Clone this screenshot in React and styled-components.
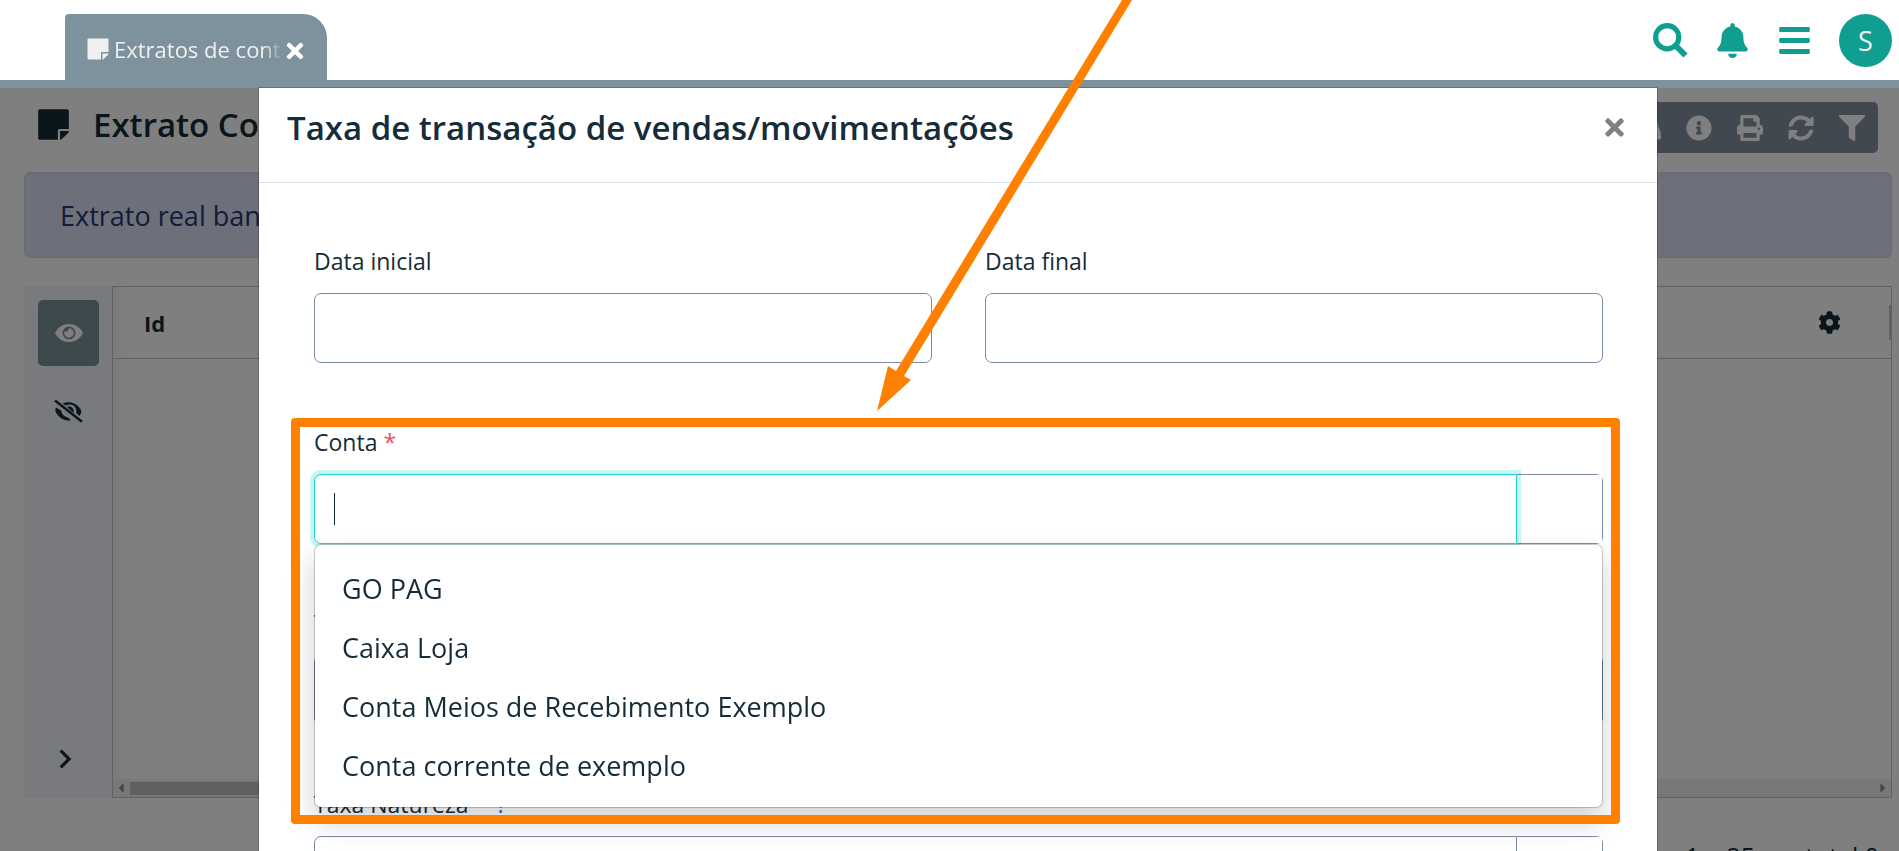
import React from "react";
import styled, { createGlobalStyle, css } from "styled-components";
import {
  FaStickyNote, FaTimes, FaBell, FaBars, FaInfoCircle, FaPrint,
  FaSyncAlt, FaFilter, FaCog, FaBinoculars, FaCaretLeft, FaCaretRight,
} from "react-icons/fa";
import { MdOutlineKeyboardArrowRight } from "react-icons/md";

const Global = createGlobalStyle`
  *, *::before, *::after { box-sizing: border-box; }
  html, body, #root { height: 100%; }
  body {
    margin: 0;
    overflow: hidden;
    background: #fff;
    color: #152c39;
    font-family: "Open Sans", "Noto Sans", sans-serif;
    font-size: 27px;
  }
  button { font: inherit; color: inherit; border: 0; padding: 0; background: none; cursor: pointer; }
  button, a { display: inline-flex; align-items: center; justify-content: center; }
  svg { display: block; flex: none; }
`;

const Page = styled.div`
  position: relative;
  display: flex;
  flex-direction: column;
  height: 100%;
  overflow: hidden;
`;

const TopBar = styled.header`
  display: flex;
  align-items: flex-end;
  justify-content: space-between;
  flex: none;
  height: 88px;
  padding: 0 7px 0 65px;
  border-bottom: 8px solid #7d929d;
`;

const Tab = styled.div`
  display: flex;
  align-items: center;
  width: 262px;
  height: 66px;
  padding: 4px 20px 0 22px;
  background: #7d929d;
  border-radius: 4px 24px 0 0;
  color: #f0f0f0;
`;

const TabLink = styled.a`
  && { justify-content: flex-start; }
  flex: 1;
  min-width: 0;
  gap: 5px;
  color: inherit;
  text-decoration: none;
  white-space: nowrap;
  overflow: hidden;
  font-size: 22px;
  -webkit-mask-image: linear-gradient(90deg, #000 90%, transparent);
  mask-image: linear-gradient(90deg, #000 90%, transparent);
`;

const TabClose = styled.button`
  && { color: #fff; }
  padding-top: 4px;
`;

const NoteIcon = styled(FaStickyNote)`
  width: ${(p) => p.$width}px;
`;

const TopActions = styled.nav`
  display: flex;
  align-items: center;
  height: 80px;
  gap: 27px;
  color: #119e92;
`;

const Avatar = styled.button`
  width: 53px;
  height: 53px;
  border-radius: 50%;
  background: #119e92;
  && { color: #f0f4f4; }
`;

const Main = styled.main`
  position: relative;
  flex: 1;
  min-height: 0;
`;

const Content = styled.section`
  padding: 14px 7px 0 24px;
`;

const TitleRow = styled.div`
  display: flex;
  align-items: center;
  justify-content: space-between;
  height: 51px;
  padding: 0 14px;
`;

const Title = styled.h1`
  display: flex;
  align-items: center;
  gap: 24px;
  margin: 0;
  padding-bottom: 6px;
  font-size: 33px;
  font-weight: 600;
`;

const Toolbar = styled.div`
  display: flex;
  align-items: center;
  gap: 25px;
  height: 51px;
  padding: 0 13px;
  background: #83909f;
  border-radius: 5px;
  color: #fff;
`;

const Notice = styled.p`
  display: flex;
  align-items: center;
  height: 86px;
  margin: 19px 0 28px;
  padding: 0 35px;
  background: #dae1f4;
  border: 1px solid #ccd7f1;
  border-radius: 6px;
  color: #223a76;
`;

const Panel = styled.div`
  display: flex;
  height: 512px;
`;

const Side = styled.aside`
  display: flex;
  flex-direction: column;
  align-items: center;
  gap: 12px;
  width: 88px;
  padding: 14px 13px 6px 14px;
  background: #f2f5fa;
`;

const SideButton = styled.button`
  width: 100%;
  height: 66px;
  border-radius: 5px;
  ${(p) => p.$active && css`
    background: #7d929d;
    && { color: #fff; }
  `}
  ${(p) => p.$last && css`
    margin-top: auto;
    padding-right: 8px;
  `}
`;

const Grid = styled.div`
  display: flex;
  flex-direction: column;
  flex: 1;
  border: 1px solid #c0c3cd;
  box-shadow: inset 16px 0 16px -12px rgba(0, 0, 0, 0.06);
`;

const GridTable = styled.table`
  width: 100%;
  border-spacing: 0;
`;

const HeadCell = styled.th`
  position: relative;
  height: 72px;
  padding: 0 50px 0 31px;
  border-bottom: 1px solid #c0c3cd;
  text-align: ${(p) => (p.$end ? "right" : "left")};
  font-size: 22px;
  font-weight: 700;
  ${(p) => p.$end && css`
    &::after {
      content: "";
      position: absolute;
      right: 0;
      top: 18px;
      width: 2px;
      height: 35px;
      background: #c0c3cd;
    }
  `}
`;

const GearButton = styled.button`
  padding-bottom: 5px;
  vertical-align: middle;
`;

const ScrollTrack = styled.div`
  display: flex;
  align-items: center;
  justify-content: space-between;
  height: 18px;
  margin-top: auto;
  padding: 0 1px;
  background: #f1f1f1;
  color: #8b8b8b;
`;

const ScrollThumb = styled.div`
  flex: 0 1 40%;
  height: 13px;
  margin: 0 auto 0 2px;
  background: #c1c1c1;
`;

const Pager = styled.p`
  margin: 40px 13px 0 0;
  font-size: 25px;
  line-height: 36px;
  text-align: right;
`;

const Backdrop = styled.div`
  position: absolute;
  inset: 0;
  padding: 0 242px 0 259px;
  background: rgba(0, 0, 0, 0.5);
`;

const Dialog = styled.div`
  min-height: 100%;
  background: #fff;
  box-shadow: 0 0 0 1px rgba(0, 0, 0, 0.2);
`;

const DialogHeader = styled.div`
  display: flex;
  align-items: center;
  justify-content: space-between;
  height: 95px;
  padding: 0 29px 15px 28px;
  border-bottom: 1px solid #dfe0e6;
`;

const DialogTitle = styled.h2`
  margin: 0;
  font-size: 33px;
  font-weight: 600;
`;

const DialogClose = styled.button`
  && { color: #808080; }
`;

const Form = styled.form`
  display: grid;
  grid-template-columns: 1fr 1fr;
  column-gap: 53px;
  row-gap: 51px;
  padding: 50px 54px 0 55px;
`;

const Field = styled.div`
  position: relative;
  min-width: 0;
  grid-column: ${(p) => (p.$wide ? "1 / -1" : "auto")};
`;

const Label = styled.label`
  display: flex;
  gap: 6px;
  height: 60px;
  padding-top: 12px;
  font-size: 23px;
  line-height: 32px;
`;

const Required = styled.span`
  color: #e8505b;
`;

const Help = styled.span`
  margin-left: 22px;
  color: #2f6be0;
`;

const TextInput = styled.input`
  display: block;
  flex: 1;
  width: 100%;
  min-width: 0;
  height: 70px;
  padding: 0 20px;
  border: 1px solid #7d8aa5;
  border-radius: 7px;
  background: #fff;
  color: inherit;
  font: inherit;
  outline: 0;
  ${(p) => p.$grouped && css`border-radius: 7px 0 0 7px;`}
  ${(p) => p.$open && css`
    position: relative;
    border-color: #20d3c8;
    box-shadow: 0 0 0 4px #c8f5f1;
    caret-color: transparent;
  `}
`;

const InputGroup = styled.div`
  position: relative;
  display: flex;
`;

const Caret = styled.span`
  position: absolute;
  top: 19px;
  left: 20px;
  width: 1px;
  height: 32px;
  background: #152c39;
  pointer-events: none;
`;

const Addon = styled.button`
  width: 86px;
  height: 70px;
  && { border: 1px solid #7d8aa5; border-left: 0; }
  clip-path: inset(0 round 0 7px 7px 0);
`;

const Menu = styled.ul`
  position: absolute;
  z-index: 2;
  top: 130px;
  left: 0;
  right: 0;
  margin: 0;
  padding: 14px 0 12px;
  list-style: none;
  background: #fff;
  background-clip: padding-box;
  border: 1px solid rgba(0, 0, 0, 0.2);
  border-radius: 7px;
  box-shadow: 0 14px 28px rgba(0, 0, 0, 0.18);
`;

const MenuItem = styled.li`
  height: 59px;
  padding: 0 27px;
  line-height: 59px;
`;

const Highlight = styled.div`
  position: absolute;
  z-index: 3;
  top: 4px;
  left: -23px;
  right: -17px;
  height: 406px;
  border: 9px solid #ff8000;
  border-radius: 4px;
  pointer-events: none;
`;

const Pointer = styled.svg`
  position: absolute;
  z-index: 4;
  top: 0;
  left: 877px;
  pointer-events: none;
`;

const SearchIcon = () => (
  <svg width="35" height="35" viewBox="0 0 35 35" fill="none" stroke="currentColor" strokeWidth="5.200" aria-hidden="true">
    <circle cx="14.200" cy="14.200" r="11.600" />
    <path strokeWidth="6" strokeLinejoin="round" d="M22 22l10.500 10.500" />
  </svg>
);

const EyeIcon = () => (
  <svg width="28" height="20" viewBox="0 0 28 20" aria-hidden="true">
    <path fill="currentColor" d="M0 10C3 4 8 1 14 1s11 3 14 9c-3 6-8 9-14 9S3 16 0 10z" />
    <circle cx="14" cy="10" r="5.600" fill="none" stroke="#7d929d" strokeWidth="1.700" />
    <path fill="#7d929d" d="M9.500 8.500a4.500 4.500 0 0 1 4-4c.8 2-1 4.300-4 4z" />
  </svg>
);

const EyeOffIcon = () => (
  <svg width="29" height="24" viewBox="0 0 29 24" fill="none" stroke="currentColor" aria-hidden="true">
    <path fill="currentColor" stroke="none" d="M2 8.500C1 10.500 1 12 2.500 14.500 5.500 19 10 21.600 15 21.600l2-.4-3-2.800C9.500 17.500 7 14 7.500 11.800z" />
    <path fill="currentColor" stroke="none" d="M8.500 4.500C14 2 20 3 24 7c3.800 4 4.300 6 1.500 10l-3.300-3C23 10 21 6 16.500 5.500c-2-.2-3.500.2-4.700 1z" />
    <path fill="currentColor" stroke="none" d="M13 8c4-1.500 7.500 1.500 6.500 6z" />
    <path strokeWidth="2.400" d="M1 1.500 28 22.700" />
  </svg>
);

const OPTIONS = ["GO PAG", "Caixa Loja", "Conta Meios de Recebimento Exemplo", "Conta corrente de exemplo"];

export default function App() {
  return (
    <Page>
      <Global />
      <TopBar>
        <Tab>
          <TabLink href="#extratos"><NoteIcon size={24} $width={22} />Extratos de contas</TabLink>
          <TabClose aria-label="Fechar aba"><FaTimes size={24} /></TabClose>
        </Tab>
        <TopActions>
          <button aria-label="Pesquisar"><SearchIcon /></button>
          <button aria-label="Notificações"><FaBell size={35} /></button>
          <button aria-label="Menu"><FaBars size={35} /></button>
          <Avatar>S</Avatar>
        </TopActions>
      </TopBar>
      <Main>
        <Content>
          <TitleRow>
            <Title><NoteIcon size={35} $width={31} />Extrato Conta</Title>
            <Toolbar>
              <button aria-label="Localizar"><FaBinoculars size={26} /></button>
              <button aria-label="Informações"><FaInfoCircle size={26} /></button>
              <button aria-label="Imprimir"><FaPrint size={26} /></button>
              <button aria-label="Atualizar"><FaSyncAlt size={26} /></button>
              <button aria-label="Filtrar"><FaFilter size={26} /></button>
            </Toolbar>
          </TitleRow>
          <Notice>Extrato real bancário</Notice>
          <Panel>
            <Side>
              <SideButton $active aria-label="Mostrar colunas"><EyeIcon /></SideButton>
              <SideButton aria-label="Ocultar colunas"><EyeOffIcon /></SideButton>
              <SideButton $last aria-label="Expandir"><MdOutlineKeyboardArrowRight size={38} /></SideButton>
            </Side>
            <Grid>
              <GridTable>
                <thead>
                  <tr>
                    <HeadCell>Id</HeadCell>
                    <HeadCell $end><GearButton aria-label="Configurar"><FaCog size={23} /></GearButton></HeadCell>
                  </tr>
                </thead>
              </GridTable>
              <ScrollTrack>
                <FaCaretLeft size={14} />
                <ScrollThumb />
                <FaCaretRight size={14} />
              </ScrollTrack>
            </Grid>
          </Panel>
          <Pager>1 a 25 em total 0</Pager>
        </Content>
        <Backdrop>
          <Dialog role="dialog" aria-labelledby="dialog-title">
            <DialogHeader>
              <DialogTitle id="dialog-title">Taxa de transação de vendas/movimentações</DialogTitle>
              <DialogClose aria-label="Fechar"><FaTimes size={27} /></DialogClose>
            </DialogHeader>
            <Form>
              <Field>
                <Label htmlFor="inicio">Data inicial</Label>
                <TextInput id="inicio" />
              </Field>
              <Field>
                <Label htmlFor="fim">Data final</Label>
                <TextInput id="fim" />
              </Field>
              <Field $wide>
                <Label htmlFor="conta">Conta <Required>*</Required></Label>
                <InputGroup>
                  <TextInput id="conta" $grouped $open autoFocus />
                  <Caret />
                  <Addon type="button" aria-label="Abrir lista de contas" />
                </InputGroup>
                <Menu>
                  {OPTIONS.map((o) => <MenuItem key={o}>{o}</MenuItem>)}
                </Menu>
                <Highlight />
              </Field>
              <Field $wide>
                <Label htmlFor="taxa">Taxa</Label>
                <TextInput id="taxa" />
              </Field>
              <Field $wide>
                <Label htmlFor="natureza">Taxa Natureza <Help>?</Help></Label>
                <InputGroup>
                  <TextInput id="natureza" $grouped />
                  <Addon type="button" aria-label="Abrir lista de naturezas" />
                </InputGroup>
              </Field>
            </Form>
          </Dialog>
        </Backdrop>
      </Main>
      <Pointer width="260" height="412" viewBox="0 0 260 412" aria-hidden="true">
        <path fill="#ff8000" d="M245 0h10L27 376l7 4L0 411l11-45 8 5z" />
      </Pointer>
    </Page>
  );
}
